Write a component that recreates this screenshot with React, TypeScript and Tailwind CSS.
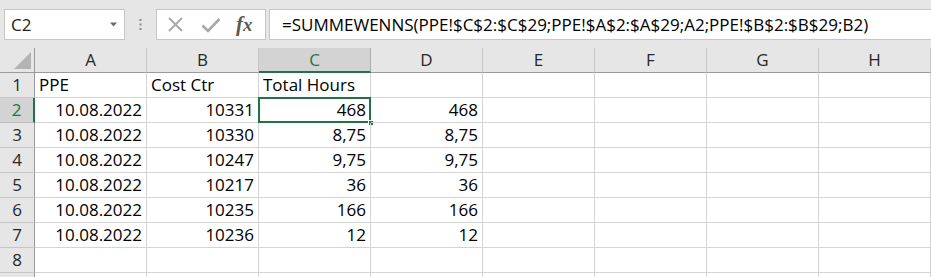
import React from 'react';

const COLS = ['A', 'B', 'C', 'D', 'E', 'F', 'G', 'H'];

type Cell = { v: string; right?: boolean };

const ROWS: Cell[][] = [
  [{ v: 'PPE' }, { v: 'Cost Ctr' }, { v: 'Total Hours' }],
  [{ v: '10.08.2022', right: true }, { v: '10331', right: true }, { v: '468', right: true }, { v: '468', right: true }],
  [{ v: '10.08.2022', right: true }, { v: '10330', right: true }, { v: '8,75', right: true }, { v: '8,75', right: true }],
  [{ v: '10.08.2022', right: true }, { v: '10247', right: true }, { v: '9,75', right: true }, { v: '9,75', right: true }],
  [{ v: '10.08.2022', right: true }, { v: '10217', right: true }, { v: '36', right: true }, { v: '36', right: true }],
  [{ v: '10.08.2022', right: true }, { v: '10235', right: true }, { v: '166', right: true }, { v: '166', right: true }],
  [{ v: '10.08.2022', right: true }, { v: '10236', right: true }, { v: '12', right: true }, { v: '12', right: true }],
  [],
  [],
];

const FORMULA = '=SUMMEWENNS(PPE!$C$2:$C$29;PPE!$A$2:$A$29;A2;PPE!$B$2:$B$29;B2)';

function FormulaBar() {
  return (
    <div className="h-[48px] bg-[#e6e6e6] flex items-center pt-[1px] pl-[4px]">
      <div className="w-[121px] h-[31px] bg-white border border-[#c6c6c6] flex items-center justify-between pl-[6px] pr-[6px]">
        <span className="text-[17px] text-[#222]">C2</span>
        <svg width="9" height="5" viewBox="0 0 9 5">
          <path d="M1 0.5 L8 0.5 L4.5 4.5 Z" fill="#6a6a6a" />
        </svg>
      </div>
      <div className="w-[31px] flex justify-center">
        <svg width="3" height="11" viewBox="0 0 3 11">
          <rect x="0.5" y="0" width="2" height="2" fill="#8a8a8a" />
          <rect x="0.5" y="4.5" width="2" height="2" fill="#8a8a8a" />
          <rect x="0.5" y="9" width="2" height="2" fill="#8a8a8a" />
        </svg>
      </div>
      <div className="w-[110px] h-[31px] bg-white border border-[#c6c6c6] flex items-center pl-[10px]">
        <svg width="17" height="17" viewBox="0 0 17 17">
          <path d="M2 2 L15 15 M15 2 L2 15" stroke="#a8a8a8" strokeWidth="1.8" />
        </svg>
        <svg width="20" height="16" viewBox="0 0 20 16" className="ml-[17px]">
          <path d="M1.5 8.5 L7 14 L18.5 2" stroke="#a8a8a8" strokeWidth="2.6" fill="none" />
        </svg>
        <span className="ml-[15px] text-[21px] italic font-bold text-[#5a5a5a] leading-none" style={{ fontFamily: '"Liberation Serif", serif' }}>
          f<span className="text-[19px]">x</span>
        </span>
      </div>
      <div className="ml-[3px] flex-1 h-[31px] bg-white border-y border-l border-[#c6c6c6] flex items-center pl-[12px] overflow-hidden">
        <span className="text-[17px] text-black whitespace-nowrap">{FORMULA}</span>
      </div>
    </div>
  );
}

function HeaderRow() {
  return (
    <>
      <div className="h-[25px] bg-[#e6e6e6] border-r border-b border-[#9b9b9b] relative">
        <svg width="17" height="17" viewBox="0 0 17 17" className="absolute right-[3px] bottom-[3px]">
          <path d="M17 0 L17 17 L0 17 Z" fill="#b4b4b4" />
        </svg>
      </div>
      {COLS.map((c) =>
        c === 'C' ? (
          <div
            key={c}
            className="h-[25px] bg-[#d3d3d3] border-r border-[#ababab] border-b-2 border-b-[#217346] flex items-center justify-center text-[17px] text-[#217346]"
          >
            {c}
          </div>
        ) : (
          <div
            key={c}
            className="h-[25px] bg-[#e6e6e6] border-r border-r-[#c6c6c6] border-b border-b-[#9b9b9b] flex items-center justify-center text-[17px] text-[#262626]"
          >
            {c}
          </div>
        )
      )}
    </>
  );
}

export default function App() {
  return (
    <div className="w-[931px] h-[277px] overflow-hidden bg-white" style={{ fontFamily: '"Open Sans", sans-serif' }}>
      <FormulaBar />
      <div className="grid grid-cols-[35px_repeat(8,112px)]">
        <HeaderRow />
        {ROWS.map((row, ri) => {
          const n = ri + 1;
          const selected = n === 2;
          // row 9 only peeks in at the bottom edge, its number is out of view
          const label = n < 9 ? n : '';
          return (
            <React.Fragment key={n}>
              {selected ? (
                <div className="h-[25px] bg-[#d3d3d3] border-r-2 border-r-[#217346] border-b border-b-[#bdbdbd] flex items-center justify-center text-[17px] text-[#217346]">
                  {label}
                </div>
              ) : (
                <div className="h-[25px] bg-[#e6e6e6] border-r border-r-[#9b9b9b] border-b border-b-[#c6c6c6] flex items-center justify-center text-[17px] text-[#262626]">
                  {label}
                </div>
              )}
              {COLS.map((c, ci) => {
                const cell = row[ci];
                const active = n === 2 && c === 'C';
                return (
                  <div
                    key={c}
                    className={`h-[25px] border-r border-b border-[#d4d4d4] flex items-center px-[4px] text-[17px] text-black whitespace-nowrap relative ${
                      cell?.right ? 'justify-end' : 'justify-start'
                    }`}
                  >
                    {cell?.v}
                    {active && (
                      <>
                        <div className="absolute left-[-1px] top-[-1px] right-[-1px] bottom-[-1px] border-2 border-[#217346]" />
                        <div className="absolute right-[-4px] bottom-[-4px] w-[6px] h-[6px] bg-[#217346] border border-white" />
                      </>
                    )}
                  </div>
                );
              })}
            </React.Fragment>
          );
        })}
      </div>
    </div>
  );
}
